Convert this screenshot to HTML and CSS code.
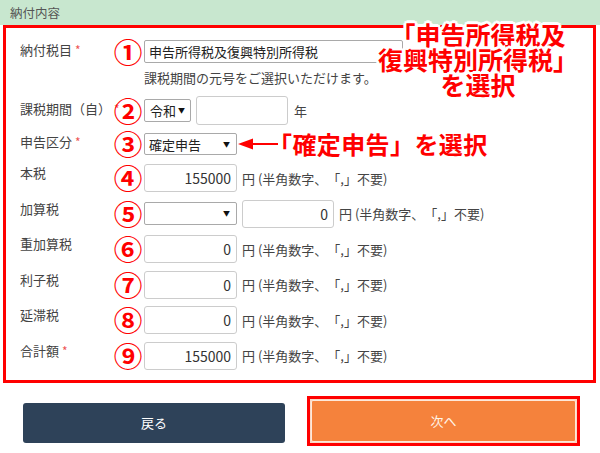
FILE: index.html
```html
<!DOCTYPE html>
<html lang="ja">
<head>
<meta charset="utf-8">
<title>納付内容</title>
<link rel="stylesheet" href="styles.css">
</head>
<body>
<div class="page">
  <div class="section-title">納付内容</div>
  <div class="panel">
    <div class="row r1">
      <div class="label">納付税目<span class="req">*</span></div>
      <div class="num">①</div>
      <div class="fields"><div class="select wide">申告所得税及復興特別所得税</div></div>
    </div>
    <div class="hint">課税期間の元号をご選択いただけます。</div>
    <div class="row r2">
      <div class="label">課税期間（自）<span class="req">*</span></div>
      <div class="num">②</div>
      <div class="fields">
        <div class="select era">令和<span class="caret">▼</span></div>
        <div class="input year"></div>
        <span class="unit">年</span>
      </div>
    </div>
    <div class="row r3">
      <div class="label">申告区分<span class="req">*</span></div>
      <div class="num">③</div>
      <div class="fields">
        <div class="select mid">確定申告<span class="caret">▼</span></div>
        <svg class="arrow" width="40" height="12" viewBox="0 0 40 12"><path d="M14 5h26v2H14z" fill="#f00"/><path d="M0 6L15 0.5V11.5z" fill="#f00"/></svg>
        <span class="note">「確定申告」を選択</span>
      </div>
    </div>
    <div class="amounts">
      <div class="row amt">
        <div class="label">本税</div>
        <div class="num">④</div>
        <div class="fields"><div class="input">155000</div><span class="unit">円 (半角数字、「,」不要)</span></div>
      </div>
      <div class="row amt">
        <div class="label">加算税</div>
        <div class="num">⑤</div>
        <div class="fields"><div class="select mid"><span class="caret">▼</span></div><div class="input second">0</div><span class="unit">円 (半角数字、「,」不要)</span></div>
      </div>
      <div class="row amt">
        <div class="label">重加算税</div>
        <div class="num">⑥</div>
        <div class="fields"><div class="input">0</div><span class="unit">円 (半角数字、「,」不要)</span></div>
      </div>
      <div class="row amt">
        <div class="label">利子税</div>
        <div class="num">⑦</div>
        <div class="fields"><div class="input">0</div><span class="unit">円 (半角数字、「,」不要)</span></div>
      </div>
      <div class="row amt">
        <div class="label">延滞税</div>
        <div class="num">⑧</div>
        <div class="fields"><div class="input">0</div><span class="unit">円 (半角数字、「,」不要)</span></div>
      </div>
      <div class="row amt">
        <div class="label">合計額<span class="req">*</span></div>
        <div class="num">⑨</div>
        <div class="fields"><div class="input">155000</div><span class="unit">円 (半角数字、「,」不要)</span></div>
      </div>
    </div>
  </div>
  <div class="buttons">
    <button class="btn back">戻る</button>
    <div class="highlight"><button class="btn next">次へ</button></div>
  </div>
  <div class="callout"><div class="cl">「申告所得税及</div><div class="cl">復興特別所得税」</div><div class="cl">を選択</div></div>
</div>
</body>
</html>
```
FILE: styles.css
```css
html, body {
  margin: 0;
  padding: 0;
  background: #fff;
}
body {
  font-family: "Noto Sans CJK JP", "Noto Sans", sans-serif;
  color: #333;
  width: 600px;
  height: 453px;
  overflow: hidden;
  text-spacing-trim: space-all;
}
.page {
  position: relative;
  width: 600px;
  height: 453px;
}
.section-title {
  height: 25px;
  background: #c8e7cf;
  color: #555;
  font-size: 12.5px;
  line-height: 26px;
  padding-left: 10px;
  box-sizing: border-box;
}
.panel {
  margin-left: 3px;
  width: 593px;
  box-sizing: border-box;
  border: 3px solid #f00;
  padding: 12px 0 10px 14px;
}
.row {
  display: flex;
  align-items: center;
}
.label {
  width: 93px;
  align-self: flex-start;
  font-size: 13px;
  line-height: 18px;
  color: #444;
  white-space: nowrap;
}
.req {
  color: #e55;
  margin-left: 3px;
  font-size: 12px;
}
.num {
  width: 30px;
  height: 24px;
  text-align: center;
  color: #f00;
  font-size: 27px;
  font-weight: 700;
  line-height: 24px;
  position: relative;
  z-index: 1;
  transform: scaleX(1.06);
}
.fields {
  display: flex;
  align-items: center;
  margin-left: 1px;
}
.r1 { height: 23px; }
.r1 .label { line-height: 19px; }
.select {
  box-sizing: border-box;
  height: 23px;
  border: 1px solid #a9a9a9;
  border-radius: 2px;
  background: #fff;
  font-size: 13px;
  line-height: 21px;
  padding-left: 4px;
  padding-right: 6px;
  color: #222;
  display: flex;
  align-items: center;
}
.select.wide { width: 259px; }
.select.era { width: 47px; padding-left: 5px; padding-right: 5px; }
.select.mid { width: 93px; }
.caret {
  margin-left: auto;
  font-size: 7px;
  color: #111;
}
.hint {
  margin: 7px 0 0 124px;
  height: 16px;
  font-size: 13px;
  line-height: 16px;
  color: #444;
}
.r2 {
  margin-top: 10px;
  height: 29px;
}
.r2 .label { margin-top: 4px; }
.input {
  box-sizing: border-box;
  width: 93px;
  height: 28px;
  border: 1px solid #ccc;
  border-radius: 3px;
  background: #fff;
  font-size: 14px;
  line-height: 26px;
  text-align: right;
  padding-right: 5px;
  color: #333;
}
.input.year {
  width: 92px;
  height: 29px;
  margin-left: 5px;
}
.input.second {
  margin-left: 5px;
  width: 92px;
}
.unit {
  font-size: 13px;
  color: #444;
  margin-left: 5px;
  white-space: nowrap;
}
.r2 .unit { margin-left: 6px; }
.r3 {
  margin-top: 8px;
  height: 22px;
}
.r3 .select { height: 22px; }
.arrow {
  margin-left: 1px;
  display: block;
}
.note {
  color: #f00;
  font-size: 24px;
  font-weight: 700;
  line-height: 22px;
  white-space: nowrap;
  letter-spacing: 0.4px;
  text-spacing-trim: trim-start;
  margin-left: 2px;
}
.amounts {
  margin-top: 9px;
  display: flex;
  flex-direction: column;
  gap: 7.5px;
}
.amt { height: 28px; }
.buttons {
  display: flex;
  align-items: flex-start;
  padding: 13px 0 0 23px;
  gap: 22px;
}
.btn {
  font-family: inherit;
  font-size: 13px;
  color: #fff;
  border: none;
  cursor: pointer;
}
.back {
  margin-top: 7px;
  width: 262px;
  height: 40px;
  background: #2e4259;
  border-radius: 3px;
}
.highlight {
  box-sizing: border-box;
  width: 273px;
  height: 50px;
  border: 3px solid #f00;
  padding: 1px;
  background: #fbd9c4;
}
.next {
  display: block;
  width: 100%;
  height: 100%;
  background: #f5823c;
  border: 1px solid #fde8da;
  border-radius: 2px;
  color: #fff6ea;
}
.callout {
  position: absolute;
  left: 378px;
  top: 22px;
  width: 200px;
  text-align: center;
  color: #f00;
  font-size: 25px;
  font-weight: 700;
  white-space: nowrap;
}
.cl {
  height: 25px;
  line-height: 24px;
  text-shadow:
    2px 0 0 #fff, -2px 0 0 #fff, 0 2px 0 #fff, 0 -2px 0 #fff,
    2px 2px 0 #fff, -2px 2px 0 #fff, 2px -2px 0 #fff, -2px -2px 0 #fff,
    3px 0 0 #fff, -3px 0 0 #fff, 0 3px 0 #fff, 0 -3px 0 #fff;
}
```
